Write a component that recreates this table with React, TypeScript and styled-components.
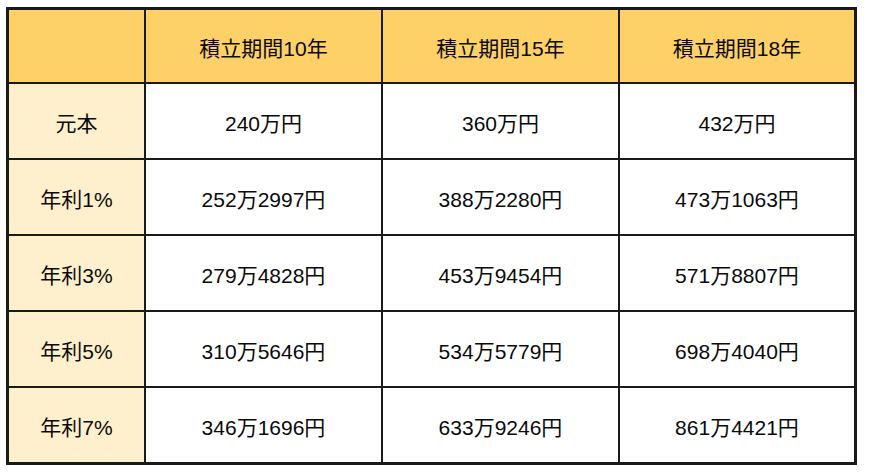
import React from "react";
import styled, { createGlobalStyle } from "styled-components";

const Global = createGlobalStyle`
  html, body { margin: 0; padding: 0; background: #ffffff; }
  body { font-family: "Liberation Sans", "Noto Sans CJK JP", sans-serif; }
`;

const Page = styled.div`
  width: 870px;
  height: 476px;
  padding: 7px 0 0 6px;
  box-sizing: border-box;
`;

const Table = styled.div`
  width: 851px;
  display: grid;
  grid-template-columns: 135px 235px 235px 1fr;
  grid-template-rows: 72px;
  grid-auto-rows: 74px;
  border: 3px solid #1a1a1a;
  background: #1a1a1a;
  gap: 2px;
  box-sizing: border-box;
`;

const Cell = styled.div<{ $kind: "head" | "side" | "body" }>`
  display: flex;
  align-items: center;
  justify-content: center;
  font-size: 21px;
  color: #0a0a0a;
  padding-top: 1px;
  background: ${(p) =>
    p.$kind === "head" ? "#fdd167" : p.$kind === "side" ? "#feefcd" : "#ffffff"};
`;

const heads = ["積立期間10年", "積立期間15年", "積立期間18年"];
const rows: [string, string[]][] = [
  ["元本", ["240万円", "360万円", "432万円"]],
  ["年利1%", ["252万2997円", "388万2280円", "473万1063円"]],
  ["年利3%", ["279万4828円", "453万9454円", "571万8807円"]],
  ["年利5%", ["310万5646円", "534万5779円", "698万4040円"]],
  ["年利7%", ["346万1696円", "633万9246円", "861万4421円"]],
];

export default function App() {
  return (
    <>
      <Global />
      <Page>
        <Table>
          <Cell $kind="head" />
          {heads.map((h) => (
            <Cell key={h} $kind="head">{h}</Cell>
          ))}
          {rows.map(([label, vals]) => (
            <React.Fragment key={label}>
              <Cell $kind="side">{label}</Cell>
              {vals.map((v) => (
                <Cell key={v} $kind="body">{v}</Cell>
              ))}
            </React.Fragment>
          ))}
        </Table>
      </Page>
    </>
  );
}
